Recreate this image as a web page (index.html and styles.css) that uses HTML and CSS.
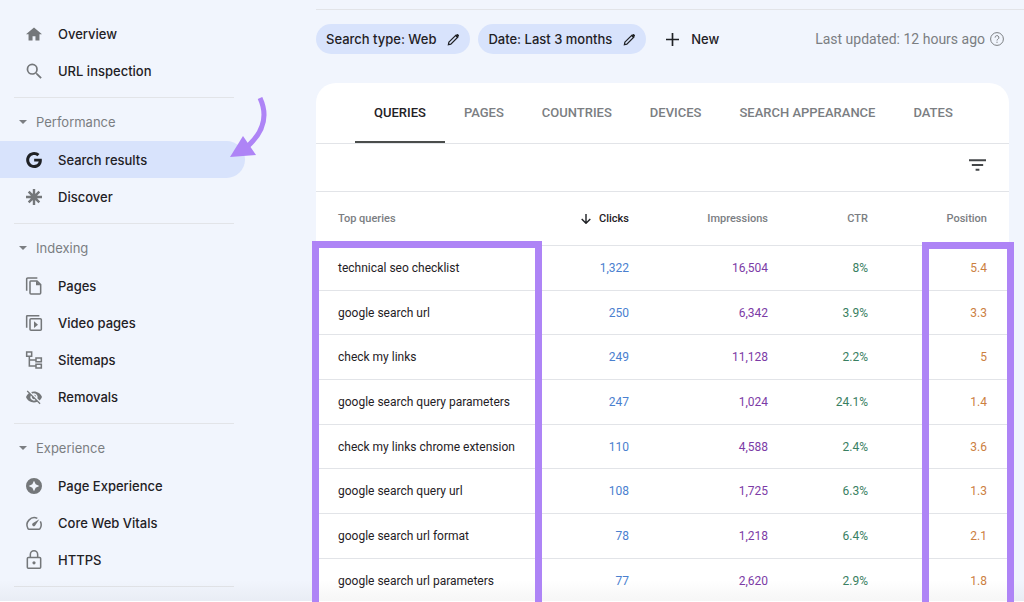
FILE: index.html
```html
<!DOCTYPE html>
<html lang="en">
<head>
<meta charset="utf-8">
<meta name="viewport" content="width=device-width, initial-scale=1">
<title>Search results</title>
<link rel="stylesheet" href="styles.css">
</head>
<body>
<div class="app">
  <nav class="sidebar" aria-label="Main">
    <section class="group">
      <a class="item" href="#"><svg class="icon" viewBox="1 1 22 20"><path d="M10 20v-6h4v6h5.500v-8.500H23L12 2 1 11.500h3.500V20z"/></svg>Overview</a>
      <a class="item" href="#"><svg class="icon" viewBox="0 0 24 24"><path d="M15.500 14h-.79l-.28-.27A6.470 6.470 0 0 0 16 9.500 6.500 6.500 0 1 0 9.500 16c1.610 0 3.090-.59 4.230-1.570l.27.28v.79l5 4.990L20.490 19zm-6 0a4.500 4.500 0 1 1 0-9 4.500 4.500 0 0 1 0 9z" transform="translate(-3 -3) scale(1.300)"/></svg>URL inspection</a>
    </section>
    <section class="group">
      <button class="heading" type="button"><span class="caret"></span>Performance</button>
      <a class="item active" href="#" aria-current="page"><svg class="icon dark" viewBox="0 0 24 24"><path d="M12.240 10.285V14.400h6.806c-.275 1.765-2.056 5.174-6.806 5.174-4.095 0-7.439-3.389-7.439-7.574s3.345-7.574 7.439-7.574c2.330 0 3.891.989 4.785 1.849l3.254-3.138C18.189 1.186 15.479 0 12.240 0c-6.635 0-12 5.365-12 12s5.365 12 12 12c6.926 0 11.520-4.869 11.520-11.726 0-.788-.085-1.390-.189-1.989H12.240z"/></svg>Search results</a>
      <a class="item" href="#"><svg class="icon line" viewBox="0 0 24 24"><path stroke-width="3.600" d="M12 0v24M0 12h24M4 4l16 16M20 4 4 20"/><circle cx="12" cy="12" r="4"/></svg>Discover</a>
    </section>
    <section class="group">
      <button class="heading" type="button"><span class="caret"></span>Indexing</button>
      <a class="item" href="#"><svg class="icon line" viewBox="0 0 24 24"><path d="M1 19V1.500Q1 0 2.500 0H17M7 4.500h9.500L22 10v12.500Q22 24 20.500 24h-13Q6 24 6 22.500V6Q6 4.500 7 4.500z"/><path class="solid" d="M15 4v7h7z"/></svg>Pages</a>
      <a class="item" href="#"><svg class="icon line" viewBox="0 0 24 24"><path d="M1 19V2Q1 1 2 1h18"/><rect x="6" y="5.500" width="17" height="17.500" rx="1.500"/><path class="solid" d="M12 9.500v10l6-5z"/></svg>Video pages</a>
      <a class="item" href="#"><svg class="icon line" viewBox="0 0 24 24"><path d="M1 0h7.500v6.500H1zM15 9h8v5.500h-8zM15 18.500h8V24h-8zM5 6.500V21h10M5 12h10"/></svg>Sitemaps</a>
      <a class="item" href="#"><svg class="icon" viewBox="1 2 22 20"><path d="M12 7a5 5 0 0 1 4.640 6.830l2.920 2.920A11.820 11.820 0 0 0 23 12C21.270 7.610 17 4.500 12 4.500c-1.400 0-2.740.25-3.980.7l2.160 2.160C10.740 7.130 11.350 7 12 7zM2 4.270l2.740 2.740A11.800 11.800 0 0 0 1 12c1.730 4.390 6 7.500 11 7.500 1.550 0 3.030-.3 4.380-.84l3.340 3.340L21 20.730 3.270 3zM7.530 9.800l1.550 1.550A3 3 0 0 0 12.650 14.920l1.550 1.550A5 5 0 0 1 7.530 9.800zm4.310-.78 3.150 3.150.02-.16a3 3 0 0 0-3-3z"/></svg>Removals</a>
    </section>
    <section class="group">
      <button class="heading" type="button"><span class="caret"></span>Experience</button>
      <a class="item" href="#"><svg class="icon" viewBox="0 0 24 24"><path fill-rule="evenodd" d="M12 0a12 12 0 1 0 0 24 12 12 0 0 0 0-24zm0 4 2.500 5.500L20 12l-5.500 2.500L12 20l-2.500-5.500L4 12l5.500-2.500z"/></svg>Page Experience</a>
      <a class="item" href="#"><svg class="icon line" viewBox="0 0 24 24"><path d="M17 5A11 11 0 0 0 3 20.500q.5 1 1.500 1h15q1 0 1.500-1a11 11 0 0 0 .5-11"/><path class="solid" d="M20 6.500 13.500 16a2.400 2.400 0 0 1-3.500-3.500z"/></svg>Core Web Vitals</a>
      <a class="item" href="#"><svg class="icon line tall" viewBox="0 0 24 28"><rect x="2" y="11" width="20" height="16" rx="1.500"/><path d="M6.500 11V6.500a5.500 5.500 0 0 1 11 0V11"/><circle class="solid" cx="12" cy="19" r="2.400"/></svg>HTTPS</a>
    </section>
    <section class="group"></section>
  </nav>

  <main class="main">
    <header class="filters">
      <button class="chip" type="button">Search type: Web <svg class="pencil" viewBox="0 0 16 16"><path d="M2.300 11.300 10.800 2.800l2.400 2.400-8.500 8.500-3 .6z"/><path class="tip" d="m10 3.500 2-2q.8-.8 1.600 0l.9.9q.8.800 0 1.600l-2 2z"/></svg></button>
      <button class="chip" type="button">Date: Last 3 months <svg class="pencil" viewBox="0 0 16 16"><path d="M2.300 11.300 10.800 2.800l2.400 2.400-8.500 8.500-3 .6z"/><path class="tip" d="m10 3.500 2-2q.8-.8 1.600 0l.9.9q.8.800 0 1.600l-2 2z"/></svg></button>
      <button class="new" type="button"><svg class="plus" viewBox="0 0 14 14"><path d="M7 0v14M0 7h14"/></svg>New</button>
      <p class="updated">Last updated: 12 hours ago <svg class="help" viewBox="0 0 14 14"><circle cx="7" cy="7" r="6.400"/><path d="M5.100 5.600a1.900 1.900 0 1 1 2.800 1.600Q7 7.700 7 8.500M7 9.700v1.200"/></svg></p>
    </header>

    <section class="card">
      <div class="tabs" role="tablist">
        <button class="tab selected" type="button" role="tab" aria-selected="true">QUERIES</button>
        <button class="tab" type="button" role="tab">PAGES</button>
        <button class="tab" type="button" role="tab">COUNTRIES</button>
        <button class="tab" type="button" role="tab">DEVICES</button>
        <button class="tab" type="button" role="tab">SEARCH APPEARANCE</button>
        <button class="tab" type="button" role="tab">DATES</button>
      </div>
      <div class="toolbar">
        <button class="filter" type="button" aria-label="Filter rows"><svg viewBox="0 0 18 12"><path d="M0 1h18M3 6h12M7 11h4"/></svg></button>
      </div>
      <div class="results">
        <table class="table">
          <thead>
            <tr><th class="query">Top queries</th><th class="clicks"><svg class="sort" viewBox="0 0 10 10"><path d="M5 0v9M.7 5 5 9.300 9.300 5"/></svg>Clicks</th><th class="impressions">Impressions</th><th class="ctr">CTR</th><th class="position">Position</th></tr>
          </thead>
          <tbody>
            <tr><td class="query">technical seo checklist</td><td class="clicks">1,322</td><td class="impressions">16,504</td><td class="ctr">8%</td><td class="position">5.4</td></tr>
            <tr><td class="query">google search url</td><td class="clicks">250</td><td class="impressions">6,342</td><td class="ctr">3.9%</td><td class="position">3.3</td></tr>
            <tr><td class="query">check my links</td><td class="clicks">249</td><td class="impressions">11,128</td><td class="ctr">2.2%</td><td class="position">5</td></tr>
            <tr><td class="query">google search query parameters</td><td class="clicks">247</td><td class="impressions">1,024</td><td class="ctr">24.1%</td><td class="position">1.4</td></tr>
            <tr><td class="query">check my links chrome extension</td><td class="clicks">110</td><td class="impressions">4,588</td><td class="ctr">2.4%</td><td class="position">3.6</td></tr>
            <tr><td class="query">google search query url</td><td class="clicks">108</td><td class="impressions">1,725</td><td class="ctr">6.3%</td><td class="position">1.3</td></tr>
            <tr><td class="query">google search url format</td><td class="clicks">78</td><td class="impressions">1,218</td><td class="ctr">6.4%</td><td class="position">2.1</td></tr>
            <tr><td class="query">google search url parameters</td><td class="clicks">77</td><td class="impressions">2,620</td><td class="ctr">2.9%</td><td class="position">1.8</td></tr>
          </tbody>
        </table>
        <div class="highlight highlight-queries"></div>
        <div class="highlight highlight-position"></div>
      </div>
    </section>
  </main>
  <div class="fade"></div>
  <svg class="arrow" viewBox="0 0 42 62"><path class="shaft" d="M31 1Q43 27 19 49"/><path class="head" d="M1 60 14 39l13 19z"/></svg>
</div>
</body>
</html>
```
FILE: styles.css
```css
:root {
  --page: #f1f5fd;
  --chip: #d8e3fc;
  --line: #e2e4e8;
  --muted: #7b7e82;
  --ink: #1f2125;
  --accent: #ae84f6;
}

* {
  box-sizing: border-box;
}

body {
  margin: 0;
  background: var(--page);
  color: var(--ink);
  font-family: Roboto, "Liberation Sans", sans-serif;
}

button {
  border: 0;
  background: none;
  color: inherit;
  font: inherit;
  cursor: pointer;
}

.app {
  position: relative;
  display: flex;
  height: 100vh;
  overflow: hidden;
}

/* Navigation */

.sidebar {
  flex: none;
  width: 245px;
  padding-top: 15px;
  font-family: Inter, "Open Sans", sans-serif;
  font-size: 13px;
  font-weight: 500;
}

.group + .group::before {
  content: "";
  display: block;
  height: 1px;
  margin: 8px 11px 5px 14px;
  background: var(--line);
}

.item,
.heading {
  display: flex;
  align-items: center;
  width: 100%;
  height: 37px;
}

.item {
  gap: 16px;
  padding-left: 26px;
  color: var(--ink);
  text-decoration: none;
}

.item.active {
  border-radius: 0 19px 19px 0;
  background: var(--chip);
}

.heading {
  gap: 9px;
  height: 38px;
  padding: 0 0 0 19px;
  color: var(--muted);
  font-weight: 400;
}

.caret {
  border: 4px solid transparent;
  border-top-color: currentColor;
  border-bottom: 0;
}

.icon {
  flex: none;
  width: 16px;
  height: 16px;
  overflow: visible;
  fill: #74777a;
}

.icon.dark {
  fill: var(--ink);
}

.icon.line {
  fill: none;
  stroke: #74777a;
  stroke-width: 2.3;
}

.icon .solid {
  fill: #74777a;
  stroke: none;
}

.icon.tall {
  height: 19px;
}

/* Filters */

.main {
  flex: 1;
  min-width: 0;
  margin-left: 71px;
  padding-top: 9px;
}

.filters {
  display: flex;
  align-items: center;
  gap: 8px;
  padding: 14px 20px 29px 0;
  border-top: 1px solid var(--line);
}

.chip,
.new {
  display: flex;
  flex: none;
  align-items: center;
  height: 30px;
  font-family: Inter, "Open Sans", sans-serif;
  font-size: 13px;
  font-weight: 500;
}

.chip {
  gap: 11px;
  padding: 0 10px;
  border-radius: 15px;
  background: var(--chip);
}

.pencil {
  width: 13px;
  height: 13px;
  fill: none;
  stroke: var(--ink);
  stroke-width: 1.5;
}

.pencil .tip {
  fill: var(--ink);
  stroke: none;
}

.new {
  gap: 12px;
  padding: 0 12px;
}

.plus {
  width: 13px;
  height: 13px;
  stroke: var(--ink);
  stroke-width: 1.8;
}

.updated {
  display: flex;
  align-items: center;
  gap: 5px;
  margin: 0 0 0 auto;
  color: var(--muted);
  font-size: 14px;
  white-space: nowrap;
}

.help {
  width: 14px;
  height: 14px;
  fill: none;
  stroke: currentColor;
}

/* Results card */

.card {
  margin-right: 15px;
  border-radius: 20px 20px 0 0;
  background: #fff;
}

.tabs {
  display: flex;
  height: 61px;
  padding-left: 39px;
  border-bottom: 1px solid var(--line);
}

.tab {
  padding: 0 19px;
  border-bottom: 2px solid transparent;
  color: var(--muted);
  font-size: 13px;
  font-weight: 500;
  white-space: nowrap;
}

.tab.selected {
  border-bottom-color: #4a4d4c;
  color: var(--ink);
}

.toolbar {
  display: flex;
  justify-content: flex-end;
  height: 48px;
  padding: 15px 23px;
  border-bottom: 1px solid var(--line);
}

.filter {
  height: 12px;
  padding: 0;
}

.filter svg {
  display: block;
  width: 17px;
  height: 12px;
  stroke: #444749;
  stroke-width: 2;
}

.results {
  position: relative;
}

.table {
  width: 100%;
  border-collapse: separate;
  border-spacing: 0;
  table-layout: fixed;
  font-size: 12px;
}

.table th,
.table td {
  height: 45px;
  padding: 0 22px;
  border-bottom: 1px solid var(--line);
  text-align: right;
  white-space: nowrap;
}

.table th {
  height: 54px;
  color: var(--muted);
  font-size: 11px;
  font-weight: 500;
}

.table tbody tr:nth-child(3n + 2) td {
  height: 44px;
}

.table .query {
  text-align: left;
}

th.clicks {
  width: 119px;
}

.table th.clicks {
  color: var(--ink);
}

th.impressions {
  width: 139px;
}

th.ctr {
  width: 100px;
}

th.position {
  width: 119px;
}

td.clicks {
  color: #4a80cf;
}

td.impressions {
  color: #7c3ba6;
}

td.ctr {
  color: #398062;
}

td.position {
  color: #cc803f;
}

.sort {
  width: 10px;
  height: 10px;
  margin-right: 8px;
  vertical-align: middle;
  fill: none;
  stroke: currentColor;
  stroke-width: 1.4;
}

/* Annotations */

.highlight {
  position: absolute;
  bottom: -8px;
  border: 7px solid var(--accent);
  pointer-events: none;
  z-index: 2;
}

.highlight-queries {
  top: 49px;
  left: -4px;
  width: 230px;
}

.highlight-position {
  top: 50px;
  right: -5px;
  width: 92px;
}

.arrow {
  position: absolute;
  top: 97px;
  left: 229px;
  width: 42px;
  height: 62px;
}

.arrow .shaft {
  fill: none;
  stroke: var(--accent);
  stroke-width: 5;
}

.arrow .head {
  fill: var(--accent);
}

.fade {
  position: absolute;
  right: 0;
  bottom: 0;
  left: 0;
  height: 22px;
  border-bottom: 1px solid #fff;
  background: linear-gradient(transparent, rgba(80, 80, 80, 0.05));
  pointer-events: none;
  z-index: 1;
}
```
